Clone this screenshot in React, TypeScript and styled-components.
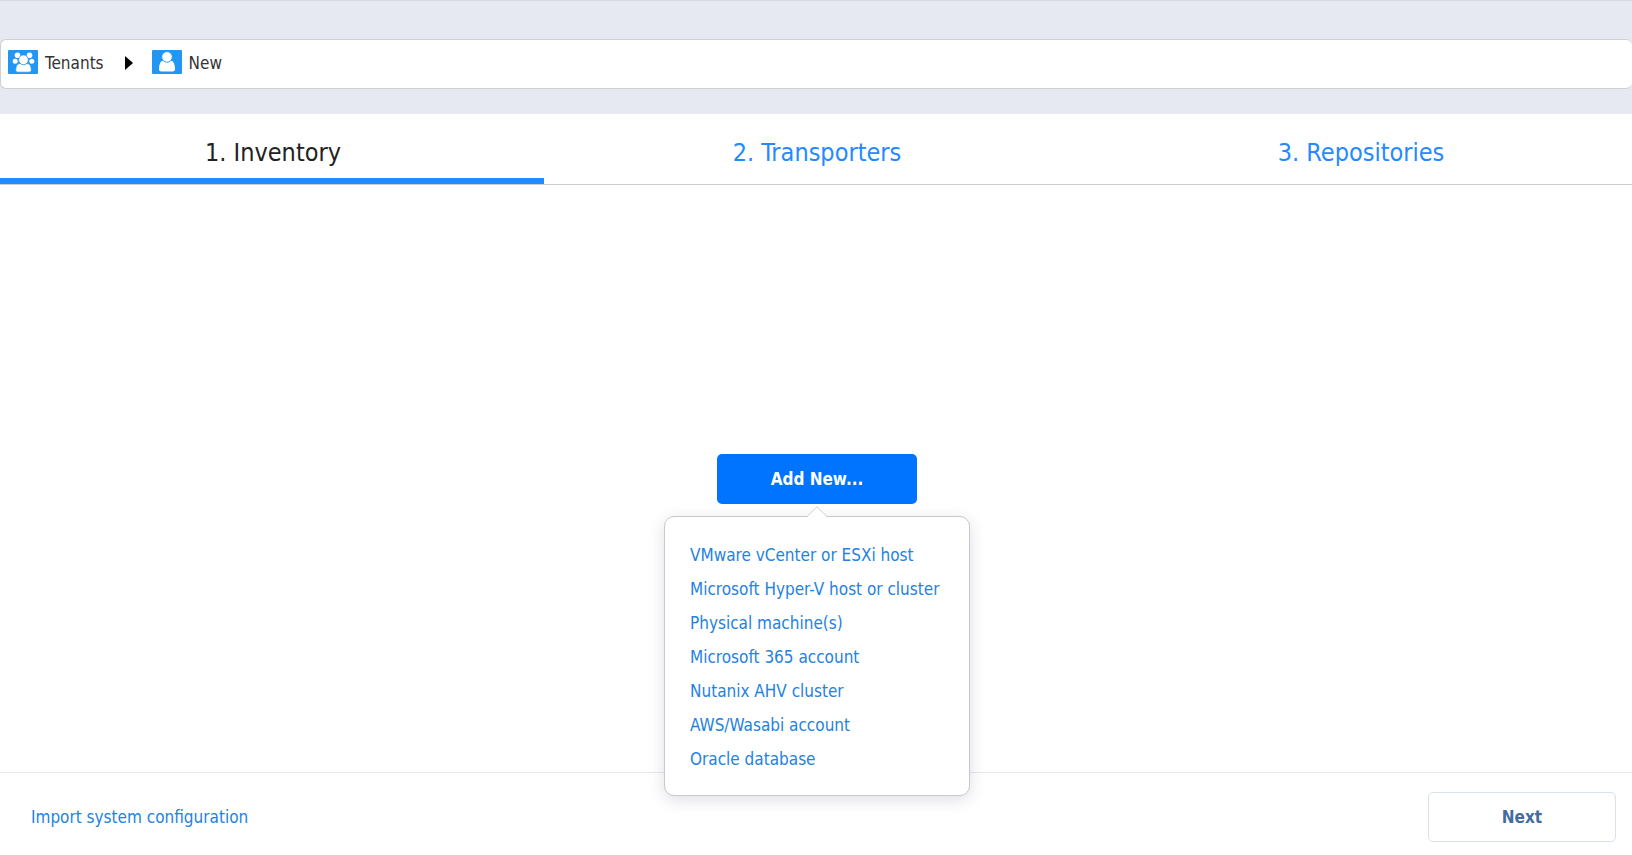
import React from "react";
import styled, { createGlobalStyle } from "styled-components";

const GlobalStyle = createGlobalStyle`
  *, *::before, *::after { box-sizing: border-box; }
  body {
    margin: 0;
    background: #fff;
    color: #333;
    font-family: Tahoma, "DejaVu Sans Condensed", "Noto Sans", sans-serif;
    font-size: 17px;
    line-height: 24px;
  }
  button { font-family: inherit; cursor: pointer; }
  a { text-decoration: none; }
`;

const Page = styled.div`
  display: flex;
  flex-direction: column;
  min-height: 100vh;
`;

const Header = styled.header`
  padding: 38px 0 25px;
  background: #e6e9f2;
  border-top: 1px solid #d5d8de;
`;

const Breadcrumbs = styled.nav`
  display: flex;
  align-items: center;
  height: 50px;
  padding: 0 7px 2px;
  background: #fff;
  border: 1px solid #d0d0d0;
  border-right: 0;
  border-radius: 6px;
`;

const Crumb = styled.a`
  display: flex;
  align-items: center;
  gap: 7px;
  color: #333;
`;

const CrumbIcon = styled.svg`
  width: 30px;
  height: 24px;
  margin-bottom: 2px;
`;

const CrumbArrow = styled.svg`
  width: 8px;
  height: 14px;
  margin: 0 19px 0 21px;
`;

const Tabs = styled.nav`
  display: grid;
  grid-template-columns: repeat(3, 1fr);
  border-bottom: 1px solid #ccc;
`;

const Tab = styled.button<{ $active?: boolean }>`
  height: 70px;
  padding: 14px 0 0 2px;
  background: none;
  border: 0;
  border-bottom: 6px solid ${(p) => (p.$active ? "#2589ff" : "transparent")};
  color: ${(p) => (p.$active ? "#222" : "#2589ff")};
  font-size: 25px;
  line-height: 36px;
`;

const Content = styled.main`
  display: flex;
  flex: 1;
  align-items: center;
  justify-content: center;
  padding-left: 2px;
`;

const MenuAnchor = styled.div`
  position: relative;
`;

const AddButton = styled.button`
  display: block;
  width: 200px;
  height: 50px;
  padding: 0;
  background: #0073ff;
  border: 0;
  border-radius: 5px;
  color: #fff;
  font-size: 17px;
  font-weight: 700;
`;

const Popup = styled.div`
  position: absolute;
  top: 62px;
  left: 50%;
  z-index: 1;
  width: max-content;
  min-width: 306px;
  padding: 21px 25px 19px;
  background: #fff;
  border: 1px solid #c8c8c8;
  border-radius: 10px;
  box-shadow: 0 4px 16px rgba(40, 40, 90, 0.15);
  transform: translateX(-50%);
`;

const PopupArrow = styled.svg`
  position: absolute;
  top: -11px;
  left: 50%;
  width: 22px;
  height: 12px;
  margin-left: -11px;
`;

const MenuList = styled.ul`
  margin: 0;
  padding: 0;
  list-style: none;
`;

const ActionLink = styled.a`
  color: #2482e0;
  line-height: 34px;
  white-space: nowrap;
`;

const Footer = styled.footer`
  display: flex;
  align-items: center;
  justify-content: space-between;
  padding: 19px 16px 13px 31px;
  border-top: 1px solid #e6e8ec;
`;

const NextButton = styled.button`
  width: 188px;
  height: 50px;
  padding: 0;
  background: #fff;
  border: 1px solid #d8e1ec;
  border-radius: 5px;
  color: #456c9e;
  font-size: 17px;
  font-weight: 700;
`;

const steps = ["1. Inventory", "2. Transporters", "3. Repositories"];

const sources = [
  "VMware vCenter or ESXi host",
  "Microsoft Hyper-V host or cluster",
  "Physical machine(s)",
  "Microsoft 365 account",
  "Nutanix AHV cluster",
  "AWS/Wasabi account",
  "Oracle database",
];

const TenantsIcon = () => (
  <CrumbIcon viewBox="0 0 30 24" aria-hidden="true">
    <rect width="30" height="24" rx="1" fill="#2196f3" />
    <g fill="#fff">
      <circle cx="9.5" cy="5.3" r="2.8" />
      <circle cx="21.5" cy="5.3" r="2.8" />
      <circle cx="7.2" cy="11.2" r="2.5" />
      <circle cx="23.8" cy="11.2" r="2.5" />
    </g>
    <g fill="#fff" stroke="#2196f3" strokeWidth="0.8">
      <path d="M7.7 20.5C7.7 16 9.3 13.6 11.8 13.6H19.2C21.7 13.6 23.3 16 23.3 20.5Q23.3 22.2 21 22.2H10Q7.7 22.2 7.7 20.5Z" />
      <circle cx="15.5" cy="9.8" r="4.9" />
    </g>
  </CrumbIcon>
);

const TenantIcon = () => (
  <CrumbIcon viewBox="0 0 30 24" aria-hidden="true">
    <rect width="30" height="24" rx="1" fill="#2196f3" />
    <g fill="#fff">
      <path d="M7 19.6C7 14.8 8.3 11.2 10.8 10.8H19.2C21.7 11.2 23 14.8 23 19.6Q23 21.6 20.6 21.6H9.4Q7 21.6 7 19.6Z" />
      <circle cx="15" cy="6.9" r="5.3" stroke="#2196f3" strokeWidth="0.9" />
    </g>
  </CrumbIcon>
);

export default function App() {
  return (
    <Page>
      <GlobalStyle />
      <Header>
        <Breadcrumbs aria-label="Breadcrumb">
          <Crumb href="#tenants">
            <TenantsIcon />
            Tenants
          </Crumb>
          <CrumbArrow viewBox="0 0 8 14" aria-hidden="true">
            <path d="M0 0L8 7L0 14Z" fill="#000" />
          </CrumbArrow>
          <Crumb href="#new" aria-current="page">
            <TenantIcon />
            New
          </Crumb>
        </Breadcrumbs>
      </Header>
      <Tabs aria-label="Steps">
        {steps.map((step, i) => (
          <Tab key={step} type="button" $active={i === 0}>
            {step}
          </Tab>
        ))}
      </Tabs>
      <Content>
        <MenuAnchor>
          <AddButton type="button" aria-expanded="true">
            Add New...
          </AddButton>
          <Popup>
            <PopupArrow viewBox="0 0 22 12" aria-hidden="true">
              <path d="M0.5 11.5L11 1L21.5 11.5V12H0.5Z" fill="#fff" />
              <path d="M0.5 11L11 0.8L21.5 11" fill="none" stroke="#d0d0d0" />
            </PopupArrow>
            <MenuList>
              {sources.map((source) => (
                <li key={source}>
                  <ActionLink href="#add">{source}</ActionLink>
                </li>
              ))}
            </MenuList>
          </Popup>
        </MenuAnchor>
      </Content>
      <Footer>
        <ActionLink href="#import">Import system configuration</ActionLink>
        <NextButton type="button">Next</NextButton>
      </Footer>
    </Page>
  );
}
